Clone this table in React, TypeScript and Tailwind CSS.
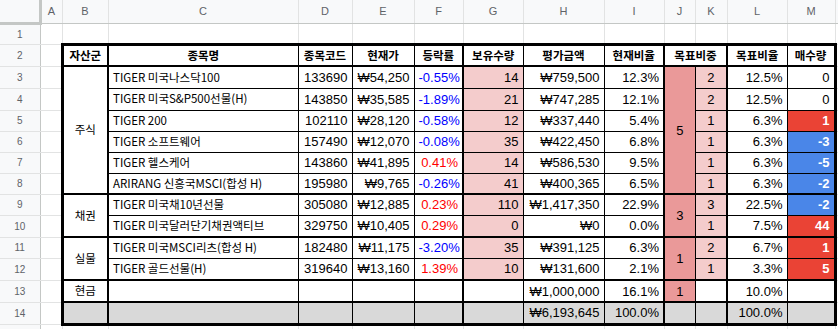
import React from "react";

const colW = [
  "w-[40px]", "w-[22px]", "w-[46px]", "w-[190px]", "w-[54px]", "w-[62px]", "w-[49px]",
  "w-[60px]", "w-[81px]", "w-[60px]", "w-[31px]", "w-[32px]", "w-[60px]", "w-[48px]", "w-[100px]",
];
const letters = ["A", "B", "C", "D", "E", "F", "G", "H", "I", "J", "K", "L", "M", ""];

const KR = "font-['Noto_Sans_CJK_KR',sans-serif] text-[11.5px]";
const NUM = "font-['Liberation_Sans','DejaVu_Sans','Noto_Sans_CJK_KR',sans-serif] text-[13px]";
const BASE = "p-0 px-[4px] whitespace-nowrap overflow-hidden align-middle text-black leading-none";
const GRID = "border-r border-b border-r-[#e2e3e3] border-b-[#e2e3e3]";
const ROWHEAD =
  "p-0 bg-[#f8f9fa] border-r border-b border-r-[#c4c7c5] border-b-[#e2e3e3] text-center text-[10px] text-[#5f6368] font-['Liberation_Sans',sans-serif] align-middle";

// left borders for table columns B..M
const LB = [
  "border-l-[3px] border-l-black",
  "border-l-2 border-l-black",
  "border-l border-l-black",
  "border-l border-l-black",
  "border-l border-l-black",
  "border-l-2 border-l-black",
  "border-l border-l-black",
  "border-l border-l-black",
  "border-l-2 border-l-black",
  "border-l border-l-black",
  "border-l-2 border-l-black",
  "border-l border-l-black border-r-[3px] border-r-black",
];

function topB(r: number) {
  if (r === 2) return "border-t-[3px] border-t-black";
  if (r === 3 || r === 9 || r === 11 || r === 13 || r === 14) return "border-t-2 border-t-black";
  return "border-t border-t-black";
}

const rowH: Record<number, string> = {
  1: "h-[21px]", 2: "h-[22px]", 3: "h-[22px]", 4: "h-[22px]", 5: "h-[21px]", 6: "h-[21px]",
  7: "h-[21px]", 8: "h-[21px]", 9: "h-[21px]", 10: "h-[22px]", 11: "h-[21px]", 12: "h-[22px]",
  13: "h-[22px]", 14: "h-[22px]", 15: "h-[21px]",
};

type Stock = {
  name: string; code: string; price: string; chg: string; qty: string; val: string;
  cur: string; k: string; tgt: string; buy: string;
};

const stocks: Stock[] = [
  { name: "TIGER 미국나스닥100", code: "133690", price: "₩54,250", chg: "-0.55%", qty: "14", val: "₩759,500", cur: "12.3%", k: "2", tgt: "12.5%", buy: "0" },
  { name: "TIGER 미국S&P500선물(H)", code: "143850", price: "₩35,585", chg: "-1.89%", qty: "21", val: "₩747,285", cur: "12.1%", k: "2", tgt: "12.5%", buy: "0" },
  { name: "TIGER 200", code: "102110", price: "₩28,120", chg: "-0.58%", qty: "12", val: "₩337,440", cur: "5.4%", k: "1", tgt: "6.3%", buy: "1" },
  { name: "TIGER 소프트웨어", code: "157490", price: "₩12,070", chg: "-0.08%", qty: "35", val: "₩422,450", cur: "6.8%", k: "1", tgt: "6.3%", buy: "-3" },
  { name: "TIGER 헬스케어", code: "143860", price: "₩41,895", chg: "0.41%", qty: "14", val: "₩586,530", cur: "9.5%", k: "1", tgt: "6.3%", buy: "-5" },
  { name: "ARIRANG 신흥국MSCI(합성 H)", code: "195980", price: "₩9,765", chg: "-0.26%", qty: "41", val: "₩400,365", cur: "6.5%", k: "1", tgt: "6.3%", buy: "-2" },
  { name: "TIGER 미국채10년선물", code: "305080", price: "₩12,885", chg: "0.23%", qty: "110", val: "₩1,417,350", cur: "22.9%", k: "3", tgt: "22.5%", buy: "-2" },
  { name: "TIGER 미국달러단기채권액티브", code: "329750", price: "₩10,405", chg: "0.29%", qty: "0", val: "₩0", cur: "0.0%", k: "1", tgt: "7.5%", buy: "44" },
  { name: "TIGER 미국MSCI리츠(합성 H)", code: "182480", price: "₩11,175", chg: "-3.20%", qty: "35", val: "₩391,125", cur: "6.3%", k: "2", tgt: "6.7%", buy: "1" },
  { name: "TIGER 골드선물(H)", code: "319640", price: "₩13,160", chg: "1.39%", qty: "10", val: "₩131,600", cur: "2.1%", k: "1", tgt: "3.3%", buy: "5" },
];

const groups: Record<number, { label: string; span: number; j: string }> = {
  0: { label: "주식", span: 6, j: "5" },
  6: { label: "채권", span: 2, j: "3" },
  8: { label: "실물", span: 2, j: "1" },
};

function RowNum({ n }: { n?: number }) {
  return <td className={ROWHEAD}>{n}</td>;
}

function Outside() {
  return <td className={`p-0 ${GRID}`}></td>;
}

function buyCls(v: string) {
  if (v === "0") return "bg-white text-black";
  if (v.startsWith("-")) return "bg-[#4a86e8] !text-white font-bold";
  return "bg-[#ea4335] !text-white font-bold";
}

function chgCls(v: string) {
  return v.startsWith("-") ? "!text-[#0000ff]" : "!text-[#ff0000]";
}

export default function App() {
  const headers = ["자산군", "종목명", "종목코드", "현재가", "등락률", "보유수량", "평가금액", "현재비율", "목표비중", "목표비율", "매수량"];
  return (
    <div className="w-[838px] h-[329px] overflow-hidden bg-white">
      <table className="border-collapse table-fixed w-[935px]">
        <colgroup>
          {colW.map((w, i) => (
            <col key={i} className={w} />
          ))}
        </colgroup>
        <tbody>
          {/* column letters */}
          <tr className="h-[23px]">
            <td className="p-0 bg-[#f8f9fa] border-r-[3px] border-b-[3px] border-r-[#c4c7c5] border-b-[#c4c7c5]"></td>
            {letters.map((l, i) => (
              <td
                key={i}
                className="p-0 bg-[#f8f9fa] border-r border-b border-r-[#e2e3e3] border-b-[#c4c7c5] text-center text-[11px] text-[#5f6368] font-['Liberation_Sans',sans-serif] align-middle"
              >
                {l}
              </td>
            ))}
          </tr>
          {/* row 1 */}
          <tr className={rowH[1]}>
            <RowNum n={1} />
            {letters.map((_, i) => (
              <Outside key={i} />
            ))}
          </tr>
          {/* row 2 header */}
          <tr className={rowH[2]}>
            <RowNum n={2} />
            <Outside />
            {headers.map((h, i) => {
              const ci = i < 9 ? i : i + 1;
              return (
                <td
                  key={i}
                  colSpan={i === 8 ? 2 : 1}
                  className={`${BASE} ${KR} font-bold text-center bg-white ${LB[ci]} ${topB(2)}`}
                >
                  {h}
                </td>
              );
            })}
            <Outside />
          </tr>
          {stocks.map((s, i) => {
            const r = i + 3;
            const g = groups[i];
            const t = topB(r);
            return (
              <tr key={i} className={rowH[r]}>
                <RowNum n={r} />
                <Outside />
                {g && (
                  <td rowSpan={g.span} className={`${BASE} ${KR} text-center bg-white ${LB[0]} ${t}`}>
                    {g.label}
                  </td>
                )}
                <td className={`${BASE} ${KR} text-left bg-white ${LB[1]} ${t}`}>{s.name}</td>
                <td className={`${BASE} ${NUM} text-right bg-white ${LB[2]} ${t}`}>{s.code}</td>
                <td className={`${BASE} ${NUM} text-right bg-white ${LB[3]} ${t}`}>{s.price}</td>
                <td className={`${BASE} ${NUM} text-right bg-white ${chgCls(s.chg)} ${LB[4]} ${t}`}>{s.chg}</td>
                <td className={`${BASE} ${NUM} text-right bg-[#f4cccc] ${LB[5]} ${t}`}>{s.qty}</td>
                <td className={`${BASE} ${NUM} text-right bg-white ${LB[6]} ${t}`}>{s.val}</td>
                <td className={`${BASE} ${NUM} text-right bg-white ${LB[7]} ${t}`}>{s.cur}</td>
                {g && (
                  <td rowSpan={g.span} className={`${BASE} ${NUM} text-center bg-[#ea9999] ${LB[8]} ${t}`}>
                    {g.j}
                  </td>
                )}
                <td className={`${BASE} ${NUM} text-center bg-[#f4cccc] ${LB[9]} ${t}`}>{s.k}</td>
                <td className={`${BASE} ${NUM} text-right bg-white ${LB[10]} ${t}`}>{s.tgt}</td>
                <td className={`${BASE} ${NUM} text-right ${buyCls(s.buy)} ${LB[11]} ${t}`}>{s.buy}</td>
                <Outside />
              </tr>
            );
          })}
          {/* row 13 cash */}
          <tr className={rowH[13]}>
            <RowNum n={13} />
            <Outside />
            <td className={`${BASE} ${KR} text-center bg-white ${LB[0]} ${topB(13)}`}>현금</td>
            <td className={`${BASE} bg-white ${LB[1]} ${topB(13)}`}></td>
            <td className={`${BASE} bg-white ${LB[2]} ${topB(13)}`}></td>
            <td className={`${BASE} bg-white ${LB[3]} ${topB(13)}`}></td>
            <td className={`${BASE} bg-white ${LB[4]} ${topB(13)}`}></td>
            <td className={`${BASE} bg-white ${LB[5]} ${topB(13)}`}></td>
            <td className={`${BASE} ${NUM} text-right bg-white ${LB[6]} ${topB(13)}`}>₩1,000,000</td>
            <td className={`${BASE} ${NUM} text-right bg-white ${LB[7]} ${topB(13)}`}>16.1%</td>
            <td className={`${BASE} ${NUM} text-center bg-[#ea9999] ${LB[8]} ${topB(13)}`}>1</td>
            <td className={`${BASE} bg-white ${LB[9]} ${topB(13)}`}></td>
            <td className={`${BASE} ${NUM} text-right bg-white ${LB[10]} ${topB(13)}`}>10.0%</td>
            <td className={`${BASE} bg-white ${LB[11]} ${topB(13)}`}></td>
            <Outside />
          </tr>
          {/* row 14 totals */}
          <tr className={rowH[14]}>
            <RowNum n={14} />
            <Outside />
            {Array.from({ length: 12 }).map((_, ci) => {
              const content = ci === 6 ? "₩6,193,645" : ci === 7 ? "100.0%" : ci === 10 ? "100.0%" : "";
              return (
                <td
                  key={ci}
                  className={`${BASE} ${NUM} text-right bg-[#d9d9d9] ${LB[ci]} ${topB(14)} border-b-[3px] border-b-black`}
                >
                  {content}
                </td>
              );
            })}
            <Outside />
          </tr>
          {/* row 15 (only its top edge is visible) */}
          <tr className={rowH[15]}>
            <RowNum />
            {letters.map((_, i) => (
              <Outside key={i} />
            ))}
          </tr>
        </tbody>
      </table>
    </div>
  );
}
